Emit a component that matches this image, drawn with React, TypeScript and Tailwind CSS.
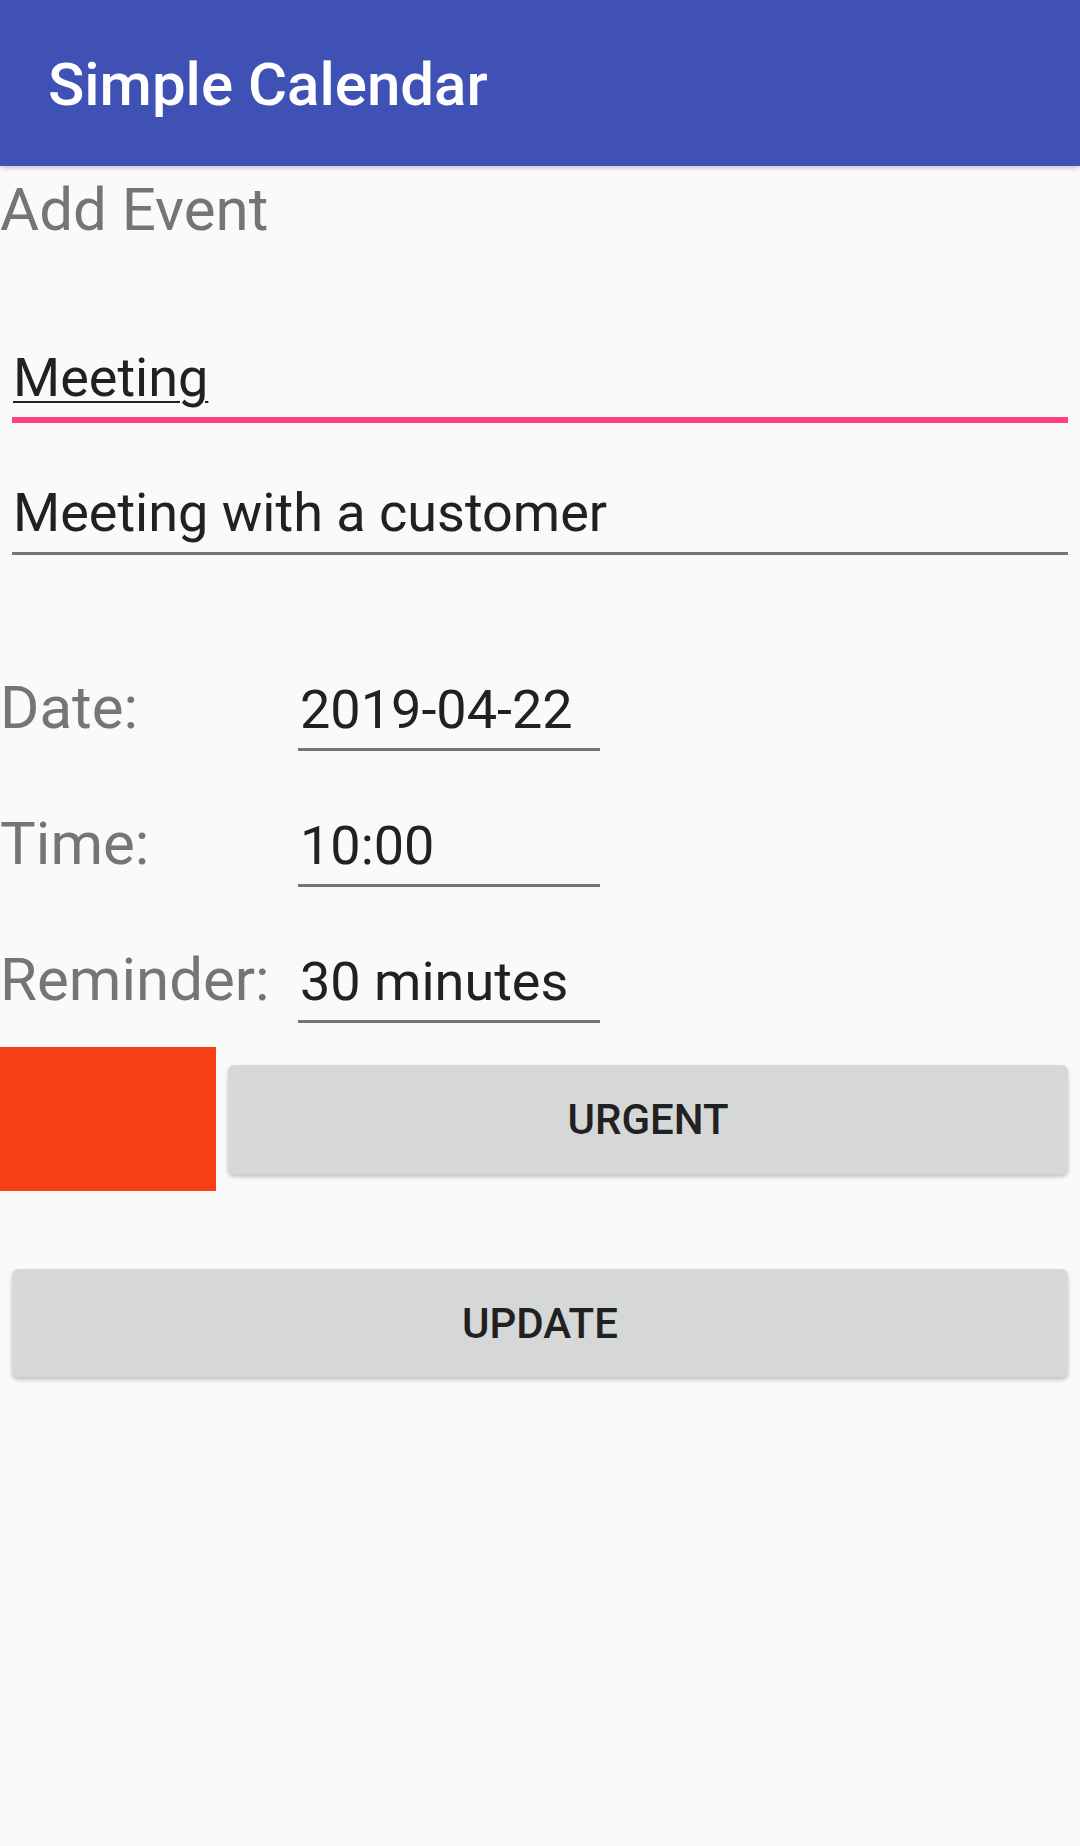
import React from 'react';

const font = { fontFamily: 'Roboto, "Noto Sans", sans-serif' };

const rows = [
  { label: 'Date:', value: '2019-04-22' },
  { label: 'Time:', value: '10:00' },
  { label: 'Reminder:', value: '30 minutes' },
];

export default function App() {
  return (
    <div className="min-h-[1846px] w-[1080px] bg-[#FAFAFA]" style={font}>
      {/* Toolbar */}
      <header className="relative z-10 h-[166px] bg-[#3F51B5] pl-[48px] pt-[55px] shadow-[0_2px_5px_rgba(0,0,0,0.22)]">
        <h1 className="text-[60px] leading-[60px] font-medium text-white">Simple Calendar</h1>
      </header>

      <div className="pt-[14px] text-[60px] leading-[60px] text-[#757575]">Add Event</div>

      {/* Title field (focused) */}
      <div className="mx-[12px] mt-[111px] border-b-[6px] border-[#FF4081] pb-[12px] pl-[1px]">
        <span className="text-[54px] leading-[54px] text-[#212121] underline decoration-[2px] underline-offset-[5px]">
          Meeting
        </span>
      </div>

      {/* Description field */}
      <div className="mx-[12px] mt-[63px] border-b-[3px] border-[#757575] pb-[12px] pl-[1px] text-[54px] leading-[54px] text-[#212121]">
        Meeting with a customer
      </div>

      {/* Date / time / reminder */}
      <div className="mt-[123px] flex flex-col gap-[63px]">
        {rows.map((r) => (
          <div key={r.label} className="flex items-baseline">
            <div className="w-[298px] text-[60px] leading-[60px] text-[#757575]">{r.label}</div>
            <div className="w-[302px] border-b-[3px] border-[#757575] pb-[11px] pl-[2px] text-[54px] leading-[54px] text-[#212121]">
              {r.value}
            </div>
          </div>
        ))}
      </div>

      {/* Colour + urgent */}
      <div className="mt-[24px] flex items-start">
        <div className="h-[144px] w-[216px] bg-[#F73F16]" />
        <button className="mx-[12px] mt-[18px] flex h-[109px] flex-1 items-center justify-center rounded-[6px] bg-[#D6D7D7] text-[42px] font-medium text-[#212121] shadow-[0_3px_4px_rgba(0,0,0,0.22)]">
          URGENT
        </button>
      </div>

      <button className="mx-[12px] mt-[78px] flex h-[108px] w-[1056px] items-center justify-center rounded-[6px] bg-[#D6D7D7] text-[42px] font-medium text-[#212121] shadow-[0_3px_4px_rgba(0,0,0,0.22)]">
        UPDATE
      </button>
    </div>
  );
}
